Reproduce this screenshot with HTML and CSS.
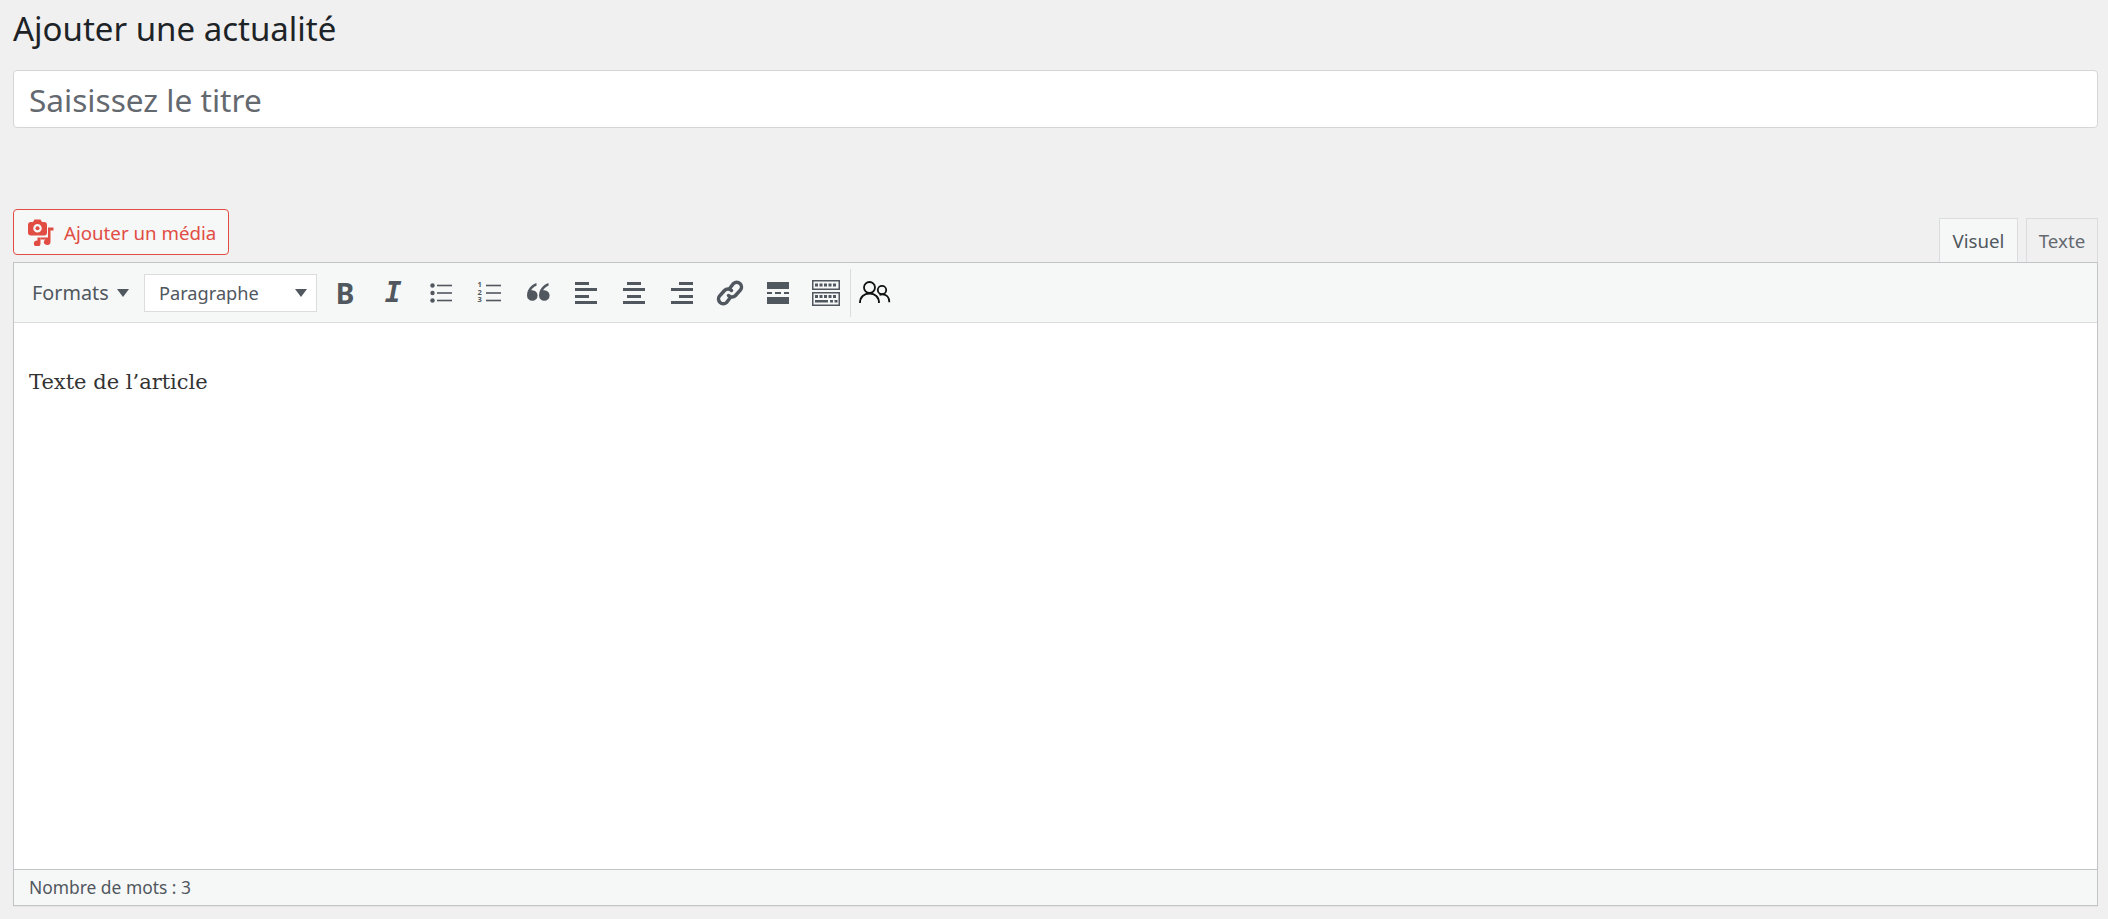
FILE: index.html
```html
<!DOCTYPE html>
<html lang="fr">
<head>
    <meta charset="UTF-8">
    <title>Ajouter une actualité</title>
    <link rel="stylesheet" href="styles.css">
</head>
<body>
    <div class="wrap">
        <h1>Ajouter une actualité</h1>
        <div class="title-box">Saisissez le titre</div>

        <div class="editor-tools">
            <a class="media-btn">
                <svg class="media-icon" width="27" height="27" viewBox="0 0 27 27">
                    <path fill-rule="evenodd" fill="#e14d43" d="M3 3h3l1.500-2.500h6l1.500 2.500h2a3 3 0 0 1 3 3v7.500a3 3 0 0 1-3 3h-13a3 3 0 0 1-3-3v-7.500a3 3 0 0 1 3-3zM10.500 5a4 4 0 1 0 0 8.500 4 4 0 0 0 0-8.500z"/>
                    <circle cx="10.500" cy="9.200" r="2" fill="#e14d43"/>
                    <path fill="#e14d43" d="M21 8.500h5.500v3h-3v11.500a3.300 3 0 1 1-2.500-3zM10.500 18.500h3v6a3.300 3 0 1 1-3-3z"/>
                    <path fill="#e14d43" d="M13.500 18.500h7.500v2h-7.500z"/>
                </svg>
                Ajouter un média
            </a>
            <div class="tabs">
                <span class="tab active">Visuel</span>
                <span class="tab">Texte</span>
            </div>
        </div>

        <div class="editor">
            <div class="toolbar">
                <span class="formats">Formats <i class="arrow"></i></span>
                <span class="format-select">Paragraphe <i class="arrow"></i></span>
                <span class="tool glyph-b">B</span>
                <span class="tool glyph-i">I</span>
                <span class="tool">
                    <svg width="24" height="24" viewBox="0 0 24 24" fill="#50575e">
                        <circle cx="3.500" cy="4.500" r="2.200"/><circle cx="3.500" cy="12" r="2.200"/><circle cx="3.500" cy="19.500" r="2.200"/>
                        <rect x="8" y="3.700" width="15" height="1.600"/><rect x="8" y="11.200" width="15" height="1.600"/><rect x="8" y="18.700" width="15" height="1.600"/>
                    </svg>
                </span>
                <span class="tool">
                    <div class="num-list">
                        <span class="num">1</span><span class="num">2</span><span class="num">3</span>
                    </div>
                    <svg width="15" height="24" viewBox="0 0 15 24" fill="#50575e">
                        <rect y="3.700" width="15" height="1.600"/><rect y="11.200" width="15" height="1.600"/><rect y="18.700" width="15" height="1.600"/>
                    </svg>
                </span>
                <span class="tool">
                    <svg width="24" height="24" viewBox="0 0 24 24" fill="#50575e">
                        <path d="M10.500 2c-5 1.800-9.500 6-9.500 12.500a5.300 5.300 0 1 0 5.300-5.300c-.5 0-.8 0-1.200.1.900-1.900 3-3.700 5.400-4.600zM22.500 2c-5 1.800-9.500 6-9.500 12.500a5.300 5.300 0 1 0 5.300-5.300c-.5 0-.8 0-1.200.1.900-1.900 3-3.700 5.400-4.600z"/>
                    </svg>
                </span>
                <span class="tool">
                    <svg width="24" height="24" viewBox="0 0 24 24" fill="#50575e">
                        <rect x="1" y="1" width="14" height="3"/><rect x="1" y="7" width="22" height="3"/><rect x="1" y="14" width="14" height="3"/><rect x="1" y="20" width="22" height="3"/>
                    </svg>
                </span>
                <span class="tool">
                    <svg width="24" height="24" viewBox="0 0 24 24" fill="#50575e">
                        <rect x="5" y="1" width="14" height="3"/><rect x="1" y="7" width="22" height="3"/><rect x="5" y="14" width="14" height="3"/><rect x="1" y="20" width="22" height="3"/>
                    </svg>
                </span>
                <span class="tool">
                    <svg width="24" height="24" viewBox="0 0 24 24" fill="#50575e">
                        <rect x="9" y="1" width="14" height="3"/><rect x="1" y="7" width="22" height="3"/><rect x="9" y="14" width="14" height="3"/><rect x="1" y="20" width="22" height="3"/>
                    </svg>
                </span>
                <span class="tool">
                    <svg width="28" height="28" viewBox="0 0 28 28" fill="none" stroke="#50575e" stroke-width="3.500" stroke-linecap="round">
                        <path d="M14 9l3.500-4.500a4.800 4.800 0 0 1 7 6.500l-5 5.500a4.800 4.800 0 0 1-7 0"/>
                        <path d="M14 19l-3.500 4.500a4.800 4.800 0 0 1-7-6.500l5-5.500a4.800 4.800 0 0 1 7 0"/>
                    </svg>
                </span>
                <span class="tool">
                    <svg width="24" height="24" viewBox="0 0 24 24" fill="#50575e">
                        <rect x="1" y="1" width="22" height="7"/><rect x="1" y="16" width="22" height="7"/>
                        <rect x="1" y="11" width="5" height="2"/><rect x="9" y="11" width="6" height="2"/><rect x="18" y="11" width="5" height="2"/>
                    </svg>
                </span>
                <span class="tool tool-last">
                    <svg width="28" height="26" viewBox="0 0 28 26" fill="#50575e">
                        <path fill-rule="evenodd" d="M0 0h28v10h-28zM1.500 1.500v7h25v-7zM0 12h28v14h-28zM1.500 13.500v11h25v-11z"/>
                        <path d="M3 3.500h3v3h-3zM7.500 3.500h3v3h-3zM12 3.500h3v3h-3zM16.500 3.500h3v3h-3zM21 3.500h3v3h-3zM3 15h3v3h-3zM7.500 15h3v3h-3zM12 15h3v3h-3zM16.500 15h3v3h-3zM21 15h3v3h-3zM3 20h13v2.500h-13zM18 20h3v2.500h-3zM22.500 20h3v2.500h-3z"/>
                    </svg>
                </span>
                <span class="tool">
                    <svg width="32" height="26" viewBox="0 0 32 26" fill="none" stroke="#111" stroke-width="1.800">
                        <circle cx="10.500" cy="7.500" r="5.500"/>
                        <path d="M1 23c0-6 4-9.500 9.500-9.500s9.500 3.500 9.500 9.500"/>
                        <circle cx="23" cy="10" r="4.200"/>
                        <path d="M20.500 14.800c1-.4 1.800-.5 2.800-.5 4.200 0 7 3 7 8"/>
                    </svg>
                </span>
            </div>
            <div class="content">Texte de l’article</div>
            <div class="status">Nombre de mots : 3</div>
        </div>
    </div>
</body>
</html>
```

FILE: styles.css
```css
body {
    margin: 0;
    background-color: #f0f0f0;
    font-family: "Noto Sans", Arial, sans-serif;
    color: #1d2327;
}
.wrap {
    padding: 0 10px 13px 13px;
}
h1 {
    margin: 0;
    padding-top: 6px;
    height: 70px;
    box-sizing: border-box;
    font-size: 33px;
    line-height: 46px;
    font-weight: 400;
}
.title-box {
    height: 58px;
    box-sizing: border-box;
    padding-left: 15px;
    background-color: white;
    border: 1px solid #d5d5d5;
    border-radius: 4px;
    font-size: 31.600px;
    line-height: 58px;
    color: #646970;
}
.editor-tools {
    display: flex;
    justify-content: space-between;
    align-items: flex-end;
    height: 134px;
}
.media-btn {
    display: flex;
    align-items: center;
    gap: 10px;
    width: 216px;
    height: 46px;
    box-sizing: border-box;
    margin-bottom: 7px;
    padding: 0 0 0 13px;
    background-color: #f6f7f7;
    border: 1px solid #e14d43;
    border-radius: 4px;
    font-size: 18.700px;
    color: #e14d43;
}
.tabs {
    display: flex;
    gap: 8px;
}
.tab {
    display: block;
    height: 44px;
    box-sizing: border-box;
    padding: 0;
    width: 72px;
    text-align: center;
    background-color: #f0f0f1;
    border: 1px solid #dcdcde;
    border-bottom: none;
    font-size: 18.700px;
    line-height: 44px;
    color: #646970;
}
.tab.active {
    width: 79px;
    background-color: #f6f7f7;
    color: #50575e;
}
.editor {
    border: 1px solid #c3c4c7;
    box-shadow: 0 1px 1px rgba(0, 0, 0, 0.04);
}
.toolbar {
    display: flex;
    align-items: center;
    height: 60px;
    box-sizing: border-box;
    background-color: #f6f7f7;
    border-bottom: 1px solid #dcdcde;
}
.formats {
    display: flex;
    align-items: center;
    gap: 8px;
    width: 130px;
    box-sizing: border-box;
    padding-left: 18px;
    font-size: 19.800px;
    color: #50575e;
}
.arrow {
    display: block;
    width: 0;
    height: 0;
    border-left: 6.500px solid transparent;
    border-right: 6.500px solid transparent;
    border-top: 8px solid #50575e;
}
.format-select {
    display: flex;
    justify-content: space-between;
    align-items: center;
    width: 173px;
    height: 38px;
    box-sizing: border-box;
    margin-right: 4px;
    padding: 0 9px 0 14px;
    background-color: white;
    border: 1px solid #dcdcde;
    font-size: 18.200px;
    color: #50575e;
}
.tool {
    display: flex;
    justify-content: center;
    align-items: center;
    flex-shrink: 0;
    width: 48.150px;
    height: 48px;
}
.tool-last {
    width: 47.150px;
    border-right: 1px solid #dcdcde;
}
.glyph-b {
    font-size: 28px;
    font-weight: 700;
    color: #50575e;
}
.glyph-i {
    font-family: "DejaVu Sans Mono", monospace;
    font-size: 28px;
    font-weight: 700;
    font-style: italic;
    color: #50575e;
}
.num-list {
    display: flex;
    flex-direction: column;
    width: 9px;
}
.num {
    display: block;
    height: 7.500px;
    font-size: 7.500px;
    line-height: 7.500px;
    font-weight: 700;
    color: #50575e;
}
.content {
    height: 546px;
    box-sizing: border-box;
    padding: 44px 15px 0;
    background-color: white;
    font-family: "DejaVu Serif", serif;
    font-size: 21px;
    line-height: 30px;
    color: #333;
}
.status {
    height: 36px;
    box-sizing: border-box;
    padding-left: 15px;
    background-color: #f6f7f7;
    border-top: 1px solid #c3c4c7;
    font-size: 17.400px;
    line-height: 35px;
    color: #50575e;
}
```
